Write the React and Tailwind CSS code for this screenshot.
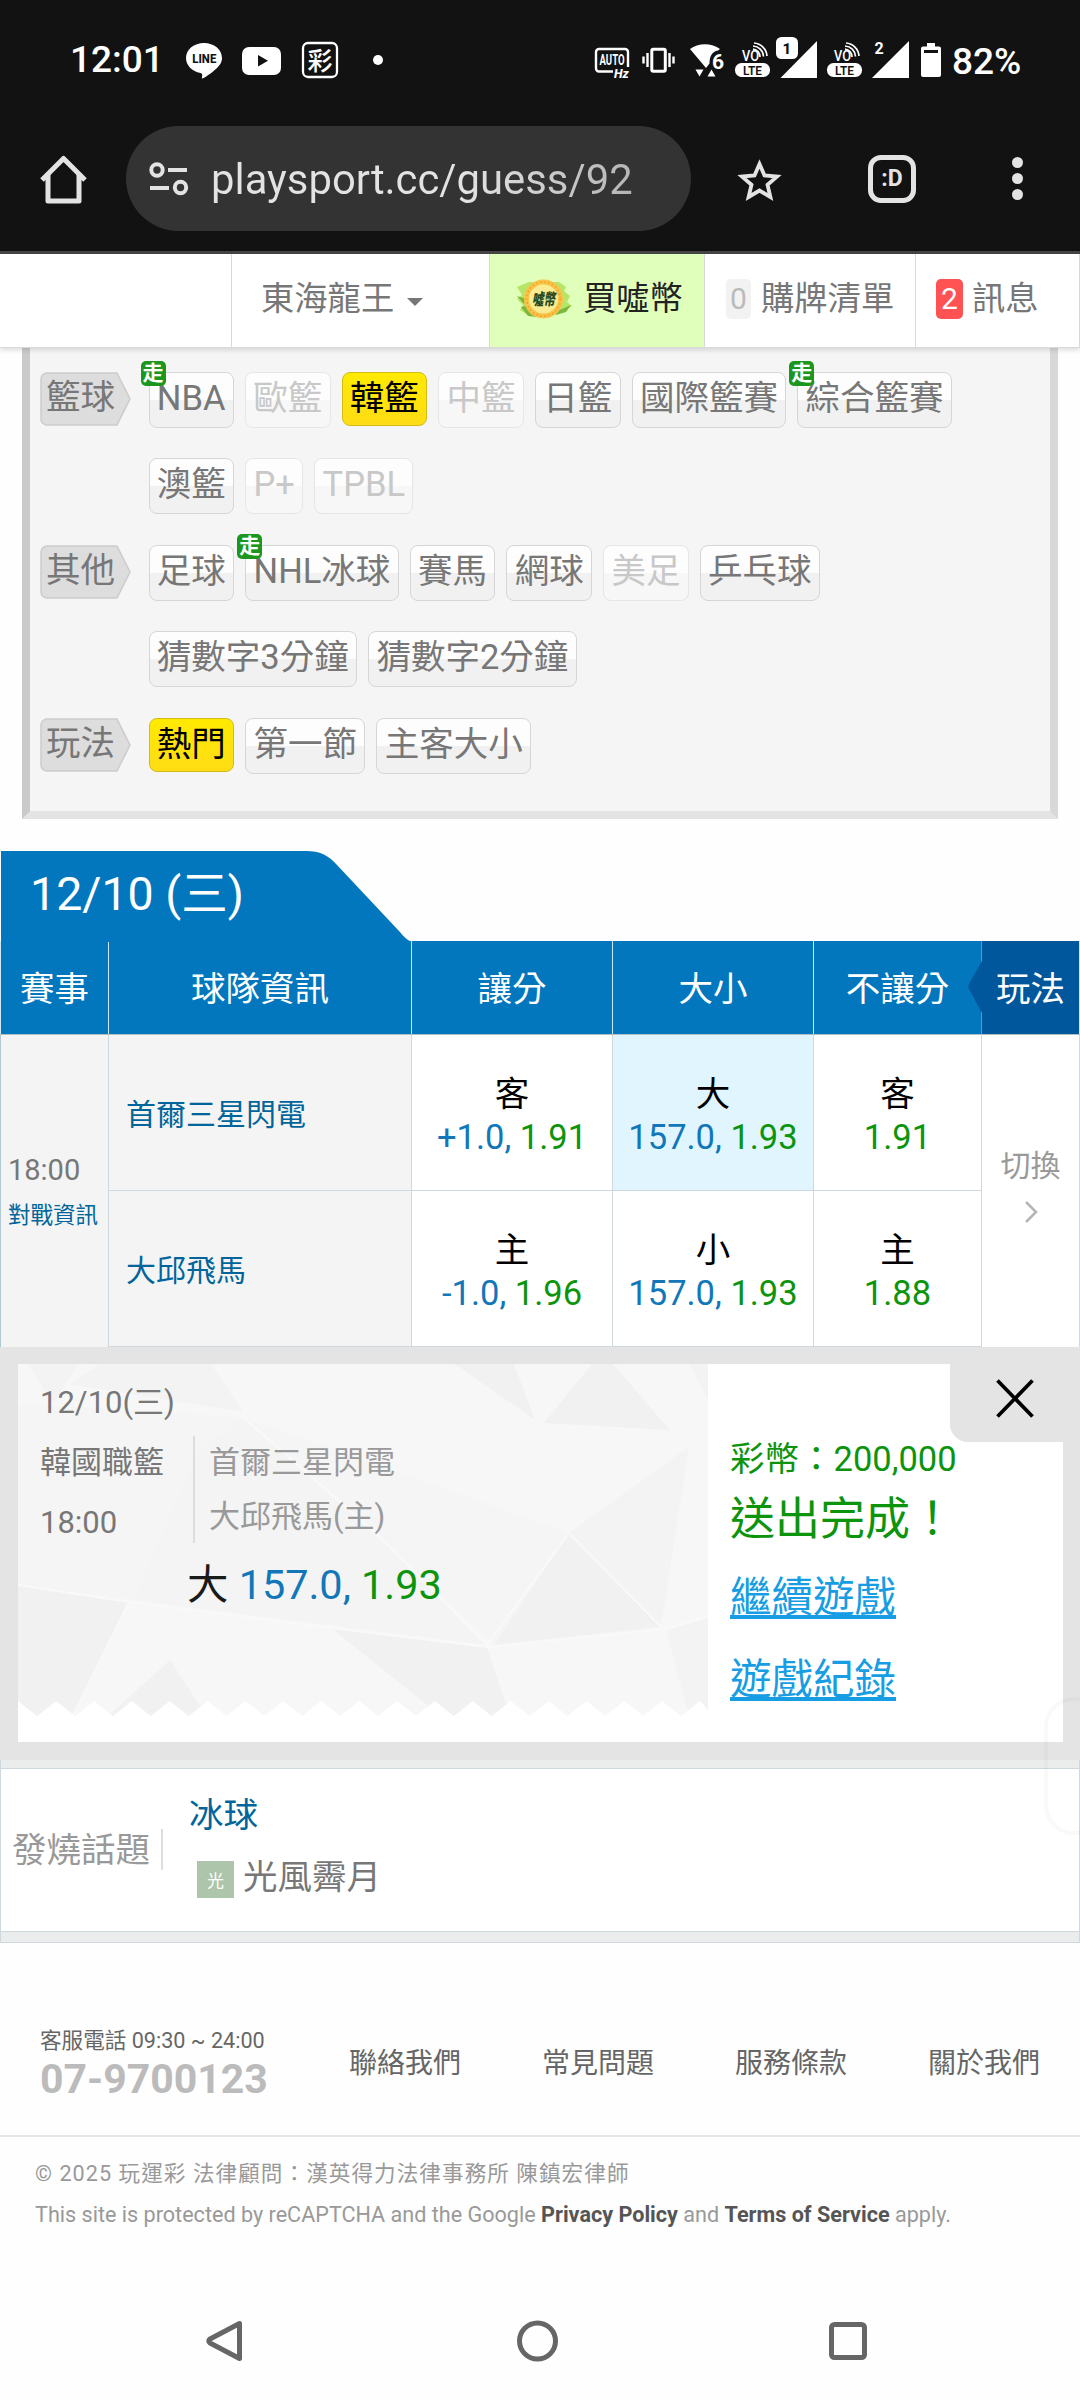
import React from 'react';
import clsx from 'clsx';

const categories = [
  {
    label: '籃球',
    lines: [
      [
        { name: 'NBA', live: true },
        { name: '歐籃', disabled: true },
        { name: '韓籃', active: true },
        { name: '中籃', disabled: true },
        { name: '日籃' },
        { name: '國際籃賽' },
        { name: '綜合籃賽', live: true },
      ],
      [{ name: '澳籃' }, { name: 'P+', disabled: true }, { name: 'TPBL', disabled: true }],
    ],
  },
  {
    label: '其他',
    lines: [
      [
        { name: '足球' },
        { name: 'NHL冰球', live: true },
        { name: '賽馬' },
        { name: '網球' },
        { name: '美足', disabled: true },
        { name: '乒乓球' },
      ],
      [{ name: '猜數字3分鐘' }, { name: '猜數字2分鐘' }],
    ],
  },
  {
    label: '玩法',
    lines: [[{ name: '熱門', active: true }, { name: '第一節' }, { name: '主客大小' }]],
  },
];

const teams = [
  {
    name: '首爾三星閃電',
    odds: [
      { side: '客', point: '+1.0,', rate: '1.91' },
      { side: '大', point: '157.0,', rate: '1.93', selected: true },
      { side: '客', rate: '1.91' },
    ],
  },
  {
    name: '大邱飛馬',
    odds: [
      { side: '主', point: '-1.0,', rate: '1.96' },
      { side: '小', point: '157.0,', rate: '1.93' },
      { side: '主', rate: '1.88' },
    ],
  },
];

const footerLinks = ['聯絡我們', '常見問題', '服務條款', '關於我們'];

function VoLte() {
  return (
    <svg width="38" height="44" viewBox="0 0 38 44" fill="none">
      <text x="9" y="23" fontSize="14" fontWeight="500" fill="#fff" textLength="17" lengthAdjust="spacingAndGlyphs">VO</text>
      <path d="M20 11a8 8 0 0 1 7 8M20 8a11 11 0 0 1 10.500 10.500M21 5a14 14 0 0 1 13 13" stroke="#fff" strokeWidth="1.700" />
      <rect x="2" y="25" width="35" height="14" rx="6.500" fill="#fff" />
      <text x="10" y="36.500" fontSize="12.500" fontWeight="600" fill="#121212" textLength="19" lengthAdjust="spacingAndGlyphs">LTE</text>
    </svg>
  );
}

function StatusBar() {
  return (
    <div className="flex h-[120px] items-center pl-[70px] text-white">
      <div className="w-[114px] text-[37px] font-medium leading-[44px]">12:01</div>
      <svg width="40" height="44" viewBox="0 0 40 44">
        <path d="M20 5C10 5 2 11.500 2 20c0 7.500 6 13.300 14.500 15 1.500.4 2 1.200 1.600 3.200l-.3 2.500c.9 0 7-3.700 11.500-7.500C35 28.700 38 25 38 20 38 11.500 30 5 20 5z" fill="#fff" />
        <text x="8.300" y="25.200" fontSize="12" fontWeight="800" fill="#121212" textLength="24" lengthAdjust="spacingAndGlyphs">LINE</text>
      </svg>
      <svg width="44" height="44" viewBox="0 0 44 44" className="ml-4">
        <rect x="2" y="9" width="39" height="28" rx="7" fill="#fff" />
        <path d="M18 17v11.500l10-5.700z" fill="#121212" />
      </svg>
      <svg width="40" height="44" viewBox="0 0 40 44" className="ml-4">
        <rect x="3" y="5" width="34" height="34" rx="5" fill="none" stroke="#fff" strokeWidth="2.300" />
        <text x="7.500" y="31.500" fontSize="25" fontWeight="500" fill="#fff">彩</text>
      </svg>
      <div className="ml-[33px] h-2.5 w-2.5 rounded-full bg-white" />

      <div className="ml-[209px] flex items-center">
        <svg width="40" height="44" viewBox="0 0 40 44" fill="none" overflow="visible">
          <path d="M21 33.500H7a3 3 0 0 1-3-3V14a3 3 0 0 1 3-3h26a3 3 0 0 1 3 3v15" stroke="#fff" strokeWidth="2.400" />
          <text x="7.500" y="26.500" fontSize="14" fontWeight="700" fill="#fff" textLength="25" lengthAdjust="spacingAndGlyphs">AUTO</text>
          <text x="22" y="39.500" fontSize="12.500" fontWeight="800" fontStyle="italic" fill="#fff">Hz</text>
        </svg>
        <svg width="38" height="44" viewBox="0 0 38 44" className="ml-2" fill="none" stroke="#fff">
          <rect x="11.800" y="11.200" width="13.500" height="22" rx="1.500" strokeWidth="3" />
          <path d="M7.500 15v14M3.500 18.500v7M29.500 15v14M33.500 18.500v7" strokeWidth="2.400" />
        </svg>
        <svg width="38" height="44" viewBox="0 0 38 44" className="ml-2.5">
          <path d="M2 11C10 4.500 24 4.500 32 11l-2 1.500c-6 1-8.500 6-8.500 13L18 30z" fill="#fff" />
          <path d="M7.500 31.500h8l-4 7zM19.500 38.500h8l-4-7z" fill="#fff" />
          <text x="24" y="30.500" fontSize="21" fontWeight="700" fill="#fff">6</text>
        </svg>
        <div className="ml-[7px]"><VoLte /></div>
        <svg width="46" height="44" viewBox="0 0 46 44" className="ml-[3px]" overflow="visible">
          <path d="M6.500 40H43V3z" fill="#fff" />
          <rect x="1" y="-1" width="24" height="24" rx="6" fill="#121212" />
          <rect x="2" y="-1" width="22" height="22" rx="5.500" fill="#fff" />
          <text x="8.500" y="15.500" fontSize="15" fontWeight="800" fill="#121212">1</text>
        </svg>
        <div className="ml-[5px]"><VoLte /></div>
        <svg width="41" height="44" viewBox="0 0 41 44" className="ml-[7px]">
          <path d="M2 40h37V3z" fill="#fff" />
          <text x="4.500" y="15.500" fontSize="16" fontWeight="700" fill="#fff">2</text>
        </svg>
        <svg width="24" height="44" viewBox="0 0 24 44" className="ml-2" fill="#fff">
          <path d="M8 5h8v3.500h4a2 2 0 0 1 2 2V37a2 2 0 0 1-2 2H4a2 2 0 0 1-2-2V10.500a2 2 0 0 1 2-2h4z" />
          <path d="M5 12h14v3H5z" fill="#121212" />
        </svg>
        <div className="ml-[9px] mt-1 text-[37px] font-medium leading-[44px]">82%</div>
      </div>
    </div>
  );
}

function BrowserBar() {
  return (
    <div className="flex h-[131px] items-start pt-[6px] text-[#e3e3e3]">
      <div className="flex h-[105px] w-full items-center">
        <svg width="50" height="50" viewBox="0 0 50 50" className="ml-[39px]" fill="none" stroke="currentColor" strokeWidth="5" strokeLinejoin="round">
          <path d="M3 26L24.500 4.500 46 26" />
          <path d="M9 20v27h31V20" />
        </svg>
        <div className="ml-[37px] flex h-[105px] w-[565px] items-center rounded-full bg-[#333333]">
          <svg width="42" height="36" viewBox="0 0 42 36" className="ml-[22px]" fill="none" stroke="currentColor" strokeWidth="4">
            <circle cx="9" cy="9" r="5.700" />
            <path d="M20 9h19M2 27h19" />
            <circle cx="32.500" cy="26.500" r="5.700" />
          </svg>
          <div className="ml-[21px] mt-[2px] bg-gradient-to-r from-[#e3e3e3] from-60% to-[#b5b5b5] bg-clip-text text-[41.800px] leading-[60px] text-transparent">playsport.cc/guess/92</div>
        </div>
        <svg width="48" height="48" viewBox="0 0 48 48" className="ml-[44px]" fill="none" stroke="currentColor" strokeWidth="3.800">
          <path d="M24.500 9l5 11.500 12.500 1.100-9.500 8.200 2.900 12.200-10.900-6.500L13.600 42l2.900-12.200L7 21.600l12.500-1.100z" />
        </svg>
        <div className="ml-[85px] flex h-[48px] w-[48px] items-center justify-center rounded-[13px] border-[5px] border-[#e3e3e3] text-[23px] font-bold leading-none">:D</div>
        <div className="ml-[96px] flex flex-col gap-[5px]">
          <div className="h-[11px] w-[11px] rounded-full bg-[#e3e3e3]" />
          <div className="h-[11px] w-[11px] rounded-full bg-[#e3e3e3]" />
          <div className="h-[11px] w-[11px] rounded-full bg-[#e3e3e3]" />
        </div>
      </div>
    </div>
  );
}

function Coin() {
  return (
    <svg width="62" height="50" viewBox="0 0 62 50">
      <path d="M5 13l12-5h30l7 5-2 4 6 5-3 6 5 4-9 6-12 3H16L8 36l3-5-6-6 5-4z" fill="#b7e567" />
      <path d="M9 33l9-2 8 12-10-1zM43 38l16-7-5 7-10 3zM5 22l9 3-2 5z" fill="#7cb83c" />
      <circle cx="31.500" cy="25" r="19.500" fill="#f9c448" />
      <circle cx="31.500" cy="25" r="17" fill="none" stroke="#f4a93a" strokeWidth="2" strokeDasharray="2 2" />
      <circle cx="31.500" cy="25" r="14.500" fill="#f8eb92" />
      <text x="20" y="31" fontSize="16" fontWeight="900" fontStyle="italic" fill="#1f4a22" textLength="23" lengthAdjust="spacingAndGlyphs">噓幣</text>
    </svg>
  );
}

function SiteNav() {
  return (
    <div className="relative z-10 flex h-[97px] border-b border-t-3 border-b-[#d9d9d9] border-t-[#444444] bg-white text-[33.300px] leading-[40px] text-[#777777] shadow-[0_2px_5px_rgba(0,0,0,0.14)]">
      <div className="w-[231px]" />
      <div className="flex w-[258px] items-center border-l border-[#d8d8d8] pb-[3px] pl-[29px]">
        <span>東海龍王</span>
        <svg width="16" height="8" viewBox="0 0 16 8" className="ml-[13px] mt-[6px]" fill="#777777">
          <path d="M0 0h16L8 8z" />
        </svg>
      </div>
      <div className="flex w-[215px] items-center border-l border-[#d8d8d8] bg-[#dfffbb] pb-[3px] pl-[22px] text-[#222222]">
        <Coin />
        <span className="ml-[9px]">買噓幣</span>
      </div>
      <div className="flex w-[211px] items-center border-l border-[#d8d8d8] pb-[3px] pl-[21px]">
        <span className="h-[40px] w-[25px] rounded-[5px] bg-[#f2f2f2] text-center text-[30px] text-[#bbbbbb]">0</span>
        <span className="ml-[10px]">購牌清單</span>
      </div>
      <div className="flex flex-1 items-center border-x border-[#d8d8d8] pb-[3px] pl-[20px]">
        <span className="h-[40px] w-[27px] rounded-[5px] bg-[#ff5252] text-center text-[30px] text-white">2</span>
        <span className="ml-[9px]">訊息</span>
      </div>
    </div>
  );
}

function Chip({ item }) {
  return (
    <div
      className={clsx(
        'relative whitespace-nowrap rounded-[8px] border px-[7.350px] leading-[51px]',
        item.active && 'h-[54px] border-[#d2bb15] bg-gradient-to-b from-[#ffea00] to-[#ffdc14] text-black',
        item.disabled && 'h-[56px] border-[#e6e6e6] bg-gradient-to-b from-[#fdfdfd] from-50% to-[#f7f7f7] to-50% text-[#c8c8c8]',
        !item.active && !item.disabled && 'h-[56px] border-[#d6d6d6] bg-gradient-to-b from-[#fdfdfd] from-50% to-[#f1f1f1] to-50% text-[#777777]'
      )}
    >
      {item.name}
      {item.live && (
        <span className="absolute -left-[9px] -top-[12px] h-[25px] w-[25px] rounded-[5px] bg-[#1d961d] text-center text-[21px] font-bold leading-[25px] text-white">走</span>
      )}
    </div>
  );
}

function CategoryPanel() {
  return (
    <div className="mx-[22px] flex h-[471px] flex-col gap-[30.400px] border-8 border-t-0 border-b-[#e3e3e3] border-l-[#cacaca] border-r-[#d8d8d8] bg-[#f5f5f5] pl-[10px] pt-[24px] text-[34.500px]">
      {categories.map((cat) => (
        <div key={cat.label} className="flex">
          <div className="relative h-[54px] w-[91px] pl-[6px] leading-[51px] text-[#777777]">
            <svg width="91" height="54" viewBox="0 0 91 54" className="absolute left-0 top-0">
              <path d="M7 1h70l13 26-13 26H7a6 6 0 0 1-6-6V7a6 6 0 0 1 6-6z" fill="#dddddd" stroke="#cccccc" strokeWidth="1.500" />
            </svg>
            <span className="relative">{cat.label}</span>
          </div>
          <div className="ml-[17.500px] flex flex-col gap-[30.400px]">
            {cat.lines.map((line, i) => (
              <div key={i} className="flex gap-[11px]">
                {line.map((item) => (
                  <Chip key={item.name} item={item} />
                ))}
              </div>
            ))}
          </div>
        </div>
      ))}
    </div>
  );
}

function OddsCell({ odd }) {
  return (
    <div
      className={clsx(
        'flex h-[156px] flex-col items-center justify-center border-b border-l border-[#cfd8dc] pt-[6px] text-[34.500px] leading-[42.500px]',
        odd.selected ? 'bg-[#e1f5fe]' : 'bg-white'
      )}
    >
      <div className="text-black">{odd.side}</div>
      <div className="whitespace-nowrap">
        {odd.point && <span className="text-[#1277b8]">{odd.point} </span>}
        <span className="text-[#0d940d]">{odd.rate}</span>
      </div>
    </div>
  );
}

function GameTable() {
  return (
    <div className="mt-[32px]">
      <div className="relative h-[90px]">
        <svg width="412" height="91" viewBox="0 0 412 91" className="absolute left-0 top-0">
          <path d="M1 0H306c14 0 22 4 31 14l62 66c5 6 8 9 13 11H1z" fill="#0277bd" />
        </svg>
        <div className="relative pl-[30px] pt-[13px] text-[46.500px] leading-[60px] text-white">12/10 (三)</div>
      </div>
      <div className="grid h-[94px] grid-cols-[108px_303px_201px_201px_168px_99px] grid-rows-[93px] border-b border-[#b0bec5] bg-[#0277bd] text-center text-[34.500px] leading-[89px] text-white *:pt-[4px]">
        <div className="border-l border-[#cfe6f3]">賽事</div>
        <div className="border-l border-[#cfe6f3]">球隊資訊</div>
        <div className="border-l border-[#cfe6f3]">讓分</div>
        <div className="border-l border-[#cfe6f3]">大小</div>
        <div className="border-l border-[#cfe6f3]">不讓分</div>
        <div className="relative border-l border-r border-l-[#4d9fd0] border-r-[#cfe6f3] bg-[#01579b]">
          <svg width="15" height="56" viewBox="0 0 15 56" className="absolute -left-[14px] top-[18px]" fill="#01579b">
            <path d="M15 0v56L1 30q-1.500-2.500 0-5z" />
          </svg>
          玩法
        </div>
      </div>
      <div className="grid grid-cols-[108px_303px_201px_201px_168px_99px]">
        <div className="row-span-2 flex flex-col border-l border-[#b0c8d2] bg-[#f4f4f4] pl-[7px] pt-[113px]">
          <div className="text-[29px] leading-[45px] text-[#777777]">18:00</div>
          <div className="whitespace-nowrap text-[22.500px] leading-[45px] text-[#01659b]">對戰資訊</div>
        </div>
        {teams.map((team, i) => (
          <React.Fragment key={team.name}>
            <div className="flex items-center border-b border-l border-[#cfd8dc] bg-[#f4f4f4] pl-[17px] pt-[4px] text-[30px] text-[#01659b]">{team.name}</div>
            {team.odds.map((odd, k) => (
              <OddsCell key={k} odd={odd} />
            ))}
            {i === 0 && (
              <div className="row-span-2 flex flex-col items-center border-x border-[#cfd8dc] bg-white pt-[106px] text-[30px] leading-[50px] text-[#999999]">
                切換
                <svg width="14" height="24" viewBox="0 0 14 24" className="mt-[9px]" fill="none" stroke="#b5b5b5" strokeWidth="2.500">
                  <path d="M2 2l10 10L2 22" />
                </svg>
              </div>
            )}
          </React.Fragment>
        ))}
      </div>
    </div>
  );
}

function TicketPaper() {
  const teeth = [];
  for (let i = 0; i < 18; i++) {
    teeth.push(`L${690 - 8 - i * 37.87} 337L${690 - 27 - i * 37.87} 352`);
  }
  return (
    <svg width="690" height="352" viewBox="0 0 690 352" className="absolute left-0 top-0">
      <defs>
        <clipPath id="paper">
          <path d={`M0 0H690V346${teeth.join('')}L0 337z`} />
        </clipPath>
      </defs>
      <g clipPath="url(#paper)">
        <path d="M0 0H690V352H0z" fill="#f7f7f7" />
        <path d="M0 40l225 13-46 36-64 147L0 221z" fill="#f5f5f5" />
        <path d="M225 53l133 116 111 112-354-45 64-147z" fill="#f4f4f4" />
        <path d="M225 53l326 116-75 112z" fill="#f5f5f5" />
        <path d="M574 0h21l57 66-126-7zM437 0h59l21 56zM551 169l92 94-167 18zM313 264l156 19 23 69h-69zM0 221l111 17-56 114H0zM152 296l37 56H90z" fill="#f1f1f1" />
        <path d="M83 0h110l32 48L51 20zM671 0h19v36zM648 266l42-12v98h-19zM551 169l120-86-28 180zM10 0h50L35 40z" fill="#f3f3f3" />
        <path d="M0 221l111 17 202 26 156 19 179-18 42-12M111 238L55 352M225 53l133 116 111 112 82-112 92 94" fill="none" stroke="#f9f9f9" strokeWidth="2" />
      </g>
    </svg>
  );
}

function BetResult() {
  return (
    <div className="relative h-[413px] bg-[#e4e4e4] pl-[18px] pr-[17px] pt-[17px]">
      <div className="flex h-[378px] bg-white">
        <div className="relative w-[690px]">
          <TicketPaper />
          <div className="relative pl-[22px] pt-[19px] text-[31px] text-[#777777]">
            <div className="leading-[40px]">12/10(三)</div>
            <div className="mt-[13px] flex h-[107px]">
              <div className="-mt-[3px] w-[153px] leading-[60px]">
                <div>韓國職籃</div>
                <div>18:00</div>
              </div>
              <div className="border-l-2 border-[#dddddd] pl-[14px] leading-[54px] text-[#999999]">
                <div>首爾三星閃電</div>
                <div>大邱飛馬(主)</div>
              </div>
            </div>
            <div className="mt-[20px] pl-[147px] text-[41.400px] leading-[44px] text-[#1a1a1a]">
              大 <span className="text-[#1277b8]">157.0, </span>
              <span className="text-[#0d940d]">1.93</span>
            </div>
          </div>
        </div>
        <div className="flex flex-col pl-[22px] pt-[70px] text-[#0d940d]">
          <div className="text-[34.500px] leading-[50px]">彩幣：200,000</div>
          <div className="mt-[3px] text-[45px] leading-[66px]">送出完成！</div>
          <a className="mt-[4px] text-[41.500px] leading-[82px] text-[#179de3] underline decoration-[3.500px] underline-offset-[3px] [text-decoration-skip-ink:none]">繼續遊戲</a>
          <a className="text-[41.500px] leading-[82px] text-[#179de3] underline decoration-[3.500px] underline-offset-[3px] [text-decoration-skip-ink:none]">遊戲紀錄</a>
        </div>
      </div>
      <div className="absolute right-0 top-0 flex h-[95px] w-[130px] justify-end rounded-bl-[18px] bg-[#e4e4e4] pr-[46px] pt-[32px]">
        <svg width="38" height="39" viewBox="0 0 38 39" fill="none" stroke="#000" strokeWidth="3.700">
          <path d="M1.500 1.500l35 36M36.500 1.500l-35 36" />
        </svg>
      </div>
    </div>
  );
}

function HotTopic() {
  return (
    <div className="border-x border-[#cfd8dc]">
      <div className="h-[9px] border-b border-[#cfd8dc] bg-[#ebeded]" />
      <div className="flex h-[162px] bg-white text-[34.500px] leading-[42px]">
        <div className="mt-[60px] flex h-[41px] w-[162px] items-center border-r-2 border-[#dddddd] pl-[11px] text-[#999999]">發燒話題</div>
        <div className="pl-[26px] pt-[25px]">
          <div className="text-[#01659b]">冰球</div>
          <div className="mt-[20px] flex items-center pl-[8px] text-[#777777]">
            <span className="mt-[5px] h-[37px] w-[37px] bg-[#adc5aa] text-center text-[17px] leading-[40px] text-white">光</span>
            <span className="ml-[9px]">光風霽月</span>
          </div>
        </div>
      </div>
      <div className="h-[12px] border-y border-[#cfd8dc] bg-[#ebeded]" />
    </div>
  );
}

function Footer() {
  return (
    <div className="text-[#666666]">
      <div className="flex items-center border-b-2 border-[#e6e6e6] pb-[34px] pl-[40px] pt-[83px]">
        <div className="w-[309px]">
          <div className="text-[21.600px] leading-[30px]">客服電話 09:30 ~ 24:00</div>
          <div className="mt-[1px] text-[41px] font-bold leading-[44px] text-[#bbbbbb]">07-9700123</div>
        </div>
        <div className="flex gap-[81px] text-[28px] leading-[40px]">
          {footerLinks.map((link) => (
            <a key={link} className="whitespace-nowrap">{link}</a>
          ))}
        </div>
      </div>
      <div className="pl-[35px] pt-[16px] text-[21.600px] leading-[41px] text-[#999999]">
        <div className="tracking-[1.050px]">© 2025 玩運彩 法律顧問：漢英得力法律事務所 陳鎮宏律師</div>
        <div>
          This site is protected by reCAPTCHA and the Google <b className="text-[#555555]">Privacy Policy</b> and{' '}
          <b className="text-[#555555]">Terms of Service</b> apply.
        </div>
      </div>
    </div>
  );
}

function SystemNav() {
  return (
    <div className="mt-[46px] flex h-[120px] items-center pl-[204px]">
      <svg width="41" height="44" viewBox="0 0 41 44" fill="none" stroke="#666666" strokeWidth="5" strokeLinejoin="round">
        <path d="M35.500 4.500v35L6 24q-2.500-2 0-4z" />
      </svg>
      <svg width="44" height="44" viewBox="0 0 44 44" className="ml-[271px]" fill="none" stroke="#666666" strokeWidth="5">
        <circle cx="21.500" cy="22" r="18" />
      </svg>
      <svg width="42" height="44" viewBox="0 0 42 44" className="ml-[267px]" fill="none" stroke="#666666" strokeWidth="5">
        <rect x="4.500" y="5.500" width="33" height="33" rx="3" />
      </svg>
    </div>
  );
}

export default function App() {
  return (
    <div className="relative h-[2400px] w-[1080px] overflow-hidden bg-[#fefefe] font-['Roboto','Noto_Sans_CJK_TC',sans-serif]">
      <div className="bg-[#121212]">
        <StatusBar />
        <BrowserBar />
      </div>
      <SiteNav />
      <CategoryPanel />
      <GameTable />
      <BetResult />
      <HotTopic />
      <Footer />
      <SystemNav />
      {/* edge panel handle floating over the page */}
      <div className="absolute -right-[24px] top-[1697px] h-[138px] w-[60px] rounded-[30px] border-4 border-black/[0.025]" />
    </div>
  );
}
